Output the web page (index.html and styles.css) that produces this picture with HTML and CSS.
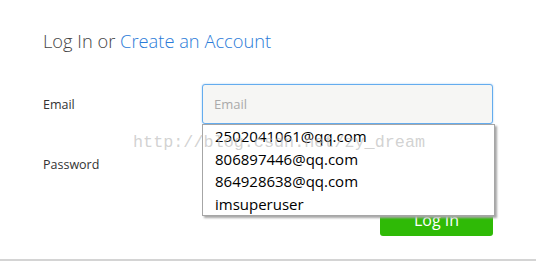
FILE: index.html
```html
<!DOCTYPE html>
<html lang="en">
<head>
    <meta charset="UTF-8">
    <meta name="viewport" content="width=device-width, initial-scale=1.0">
    <title>Log In</title>
    <link rel="stylesheet" href="styles.css">
</head>
<body>
    <div class="panel">
        <h2 class="title">Log In or <a href="#">Create an Account</a></h2>

        <form class="login-form">
            <div class="row">
                <label for="email">Email</label>
                <div class="field">
                    <input id="email" class="input focused" type="text" placeholder="Email">
                    <ul class="suggest">
                        <li>2502041061@qq.com</li>
                        <li>806897446@qq.com</li>
                        <li>864928638@qq.com</li>
                        <li>imsuperuser</li>
                    </ul>
                </div>
            </div>
            <div class="row">
                <label for="password">Password</label>
                <div class="field">
                    <input id="password" class="input" type="password">
                </div>
            </div>
            <div class="actions">
                <button type="button" class="btn-login">Log In</button>
            </div>
        </form>

        <span class="watermark">http://blog.csdn.net/zy_dream</span>
    </div>
</body>
</html>
```

FILE: styles.css
```css
body {
    margin: 0;
    background: #fff;
    font-family: "Open Sans", "Noto Sans", sans-serif;
}

.panel {
    position: relative;
    width: 536px;
    height: 261px;
    box-sizing: border-box;
    padding: 28px 0 0 43px;
    border-bottom: 2px solid #d4d4d4;
}

.title {
    margin: 0 0 30px;
    font-size: 18.3px;
    font-weight: 300;
    line-height: 26px;
    color: #444;
}

.title a {
    color: #2a7bd8;
    text-decoration: none;
}

.login-form {
    width: 450px;
}

.row {
    display: grid;
    grid-template-columns: 159px 291px;
    align-items: center;
    margin-bottom: 20px;
}

.row label {
    font-size: 12.5px;
    color: #333;
}

.field {
    position: relative;
}

.input {
    display: block;
    width: 100%;
    height: 40px;
    box-sizing: border-box;
    padding: 0 11px;
    border: 1px solid #d8d8d8;
    border-radius: 3px;
    background: #f6f6f4;
    font-family: inherit;
    font-size: 13px;
    color: #333;
    outline: none;
}

.input::placeholder {
    color: #aaa;
}

.input.focused {
    border-color: #64acee;
    box-shadow: 0 0 2px rgba(100, 172, 238, 0.6);
}

.suggest {
    position: absolute;
    top: 40px;
    left: 0;
    z-index: 2;
    width: 293px;
    box-sizing: border-box;
    margin: 0;
    padding: 0 0 0 12px;
    list-style: none;
    background: #fff;
    border: 1px solid #a6a6a6;
    box-shadow: 2px 2px 2px #a8a8a8;
}

.suggest li {
    height: 22.5px;
    line-height: 22.5px;
    font-size: 15px;
    color: #000;
}

.actions {
    display: flex;
    justify-content: flex-end;
    margin-top: 4px;
}

.btn-login {
    width: 113px;
    height: 32px;
    border: none;
    border-radius: 3px;
    background: #2fba06;
    color: #fff;
    font-family: inherit;
    font-size: 16px;
}

.watermark {
    position: absolute;
    top: 133px;
    left: 133px;
    z-index: 3;
    font-family: "Liberation Mono", monospace;
    font-size: 16.8px;
    color: rgba(185, 185, 185, 0.65);
    pointer-events: none;
}
```
